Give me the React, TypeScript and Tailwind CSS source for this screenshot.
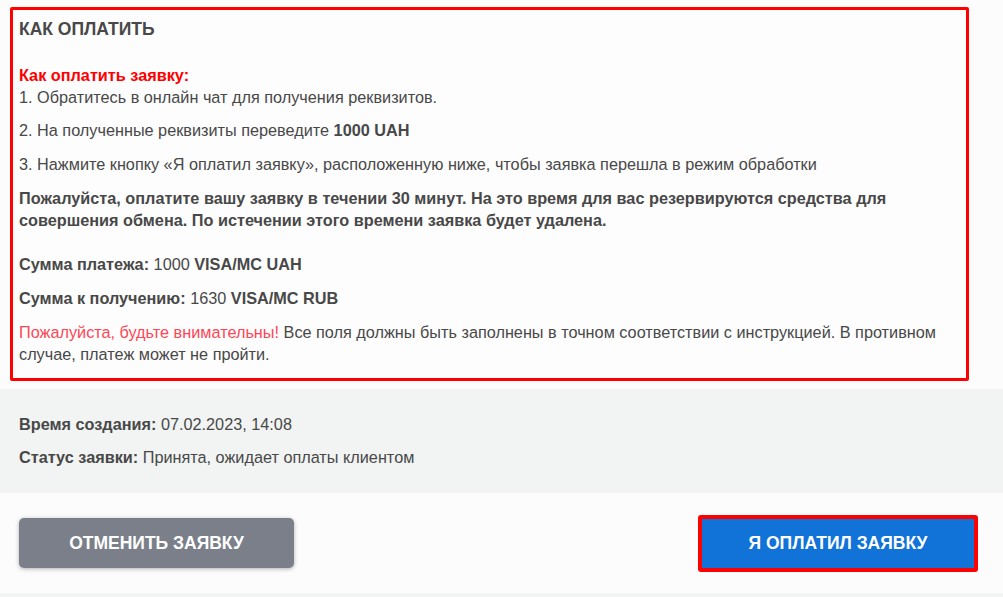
import React from "react";

const rows = [
  { label: "Время создания:", value: "07.02.2023, 14:08" },
  { label: "Статус заявки:", value: "Принята, ожидает оплаты клиентом" },
];

export default function App() {
  return (
    <div
      className="min-h-[597px] bg-[#fcfcfc] text-[16.25px] leading-[22px] text-[#484848]"
      style={{ fontFamily: '"Liberation Sans", Arial, sans-serif' }}
    >
      <div className="pt-[7px] pl-[10px] pr-[34px]">
        <div className="border-[3px] border-[#ff0000] rounded-[2px] bg-[#fdfdfd] pl-[6px] pr-4 pt-2 pb-[13px]">
          <h3 className="font-bold text-[17.5px] mb-6">КАК ОПЛАТИТЬ</h3>
          <p className="mb-[11px]">
            <b className="text-[#ff0000]">Как оплатить заявку:</b>
            <br />
            1. Обратитесь в онлайн чат для получения реквизитов.
          </p>
          <p className="mb-3">
            2. На полученные реквизиты переведите <b>1000 UAH</b>
          </p>
          <p className="mb-3">
            3. Нажмите кнопку «Я оплатил заявку», расположенную ниже, чтобы
            заявка перешла в режим обработки
          </p>
          <p className="mb-[22px] font-bold">
            Пожалуйста, оплатите вашу заявку в течении 30 минут. На это время
            для вас резервируются средства для совершения обмена. По истечении
            этого времени заявка будет удалена.
          </p>
          <p className="mb-3">
            <b>Сумма платежа:</b> 1000 <b>VISA/MC UAH</b>
          </p>
          <p className="mb-3">
            <b>Сумма к получению:</b> 1630 <b>VISA/MC RUB</b>
          </p>
          <p>
            <span className="text-[#ff4655]">Пожалуйста, будьте внимательны!</span>{" "}
            Все поля должны быть заполнены в точном соответствии с инструкцией.
            В противном случае, платеж может не пройти.
          </p>
        </div>
      </div>

      <section className="mt-2 bg-[#f1f4f3] pl-[19px] pt-6 pb-[25px] flex flex-col gap-[11px]">
        {rows.map((r, idx) => (
          <p key={idx}>
            <b>{r.label}</b> {r.value}
          </p>
        ))}
      </section>

      <section className="flex justify-between items-center pl-[19px] pr-[25px] h-[100px]">
        <button className="w-[275px] h-[50px] rounded-[5px] bg-[#7b7f8a] text-white text-[17.5px] font-bold uppercase shadow-[0_1px_4px_rgba(0,0,0,0.3)]">
          Отменить заявку
        </button>
        <div className="border-4 border-[#ff0000] rounded-[3px]">
          <button className="w-[272px] h-[49px] block bg-[#1172d7] text-white text-[17.5px] font-bold uppercase">
            Я оплатил заявку
          </button>
        </div>
      </section>
      <div className="h-1 bg-[#f1f4f3]" />
    </div>
  );
}
